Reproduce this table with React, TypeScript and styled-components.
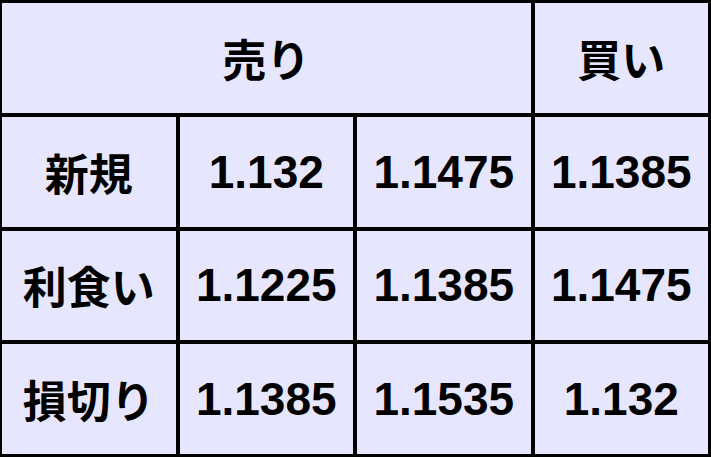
import React from "react";
import styled, { createGlobalStyle } from "styled-components";

const GlobalStyle = createGlobalStyle`
  html, body {
    margin: 0;
    padding: 0;
    background: #ffffff;
  }
`;

const Grid = styled.div`
  box-sizing: border-box;
  width: 711px;
  height: 457px;
  display: grid;
  grid-template-columns: repeat(4, 1fr);
  grid-template-rows: repeat(4, 1fr);
  gap: 4px;
  padding: 3px 3px 3px 2px;
  background: #000000;
`;

const Cell = styled.div<{ $span?: number; $label?: boolean }>`
  grid-column: span ${(p) => p.$span ?? 1};
  display: flex;
  align-items: center;
  justify-content: center;
  background: #e6e6ff;
  color: #000000;
  font-weight: 700;
  font-family: ${(p) =>
    p.$label
      ? `"Noto Sans CJK JP", "Noto Sans", sans-serif`
      : `"Liberation Sans", Arial, sans-serif`};
  font-size: ${(p) => (p.$label ? "44px" : "46px")};
  line-height: 1;
  white-space: nowrap;
`;

const rows = [
  { label: "新規", values: ["1.132", "1.1475", "1.1385"] },
  { label: "利食い", values: ["1.1225", "1.1385", "1.1475"] },
  { label: "損切り", values: ["1.1385", "1.1535", "1.132"] },
];

export default function App() {
  return (
    <>
      <GlobalStyle />
      <Grid>
        <Cell $span={3} $label>
          売り
        </Cell>
        <Cell $label>買い</Cell>
        {rows.map((r) => (
          <React.Fragment key={r.label}>
            <Cell $label>{r.label}</Cell>
            {r.values.map((v, i) => (
              <Cell key={i}>{v}</Cell>
            ))}
          </React.Fragment>
        ))}
      </Grid>
    </>
  );
}
